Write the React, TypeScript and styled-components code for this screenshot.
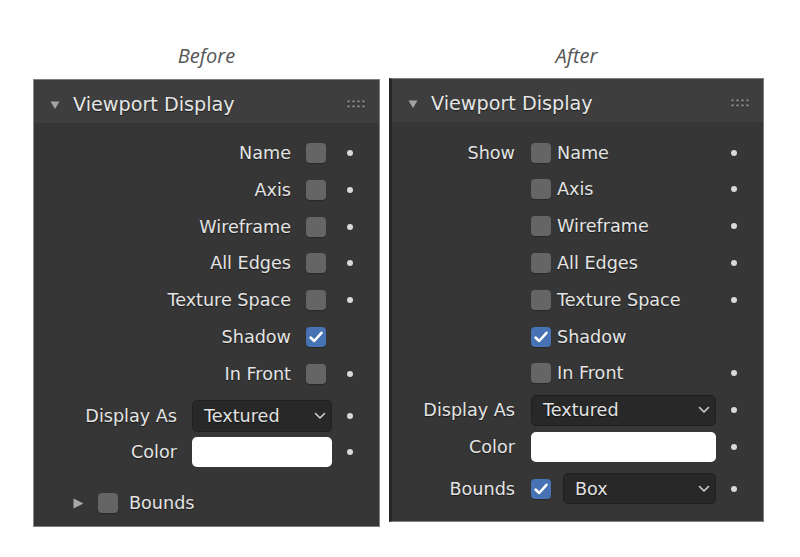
import React from 'react';
import styled, { createGlobalStyle } from 'styled-components';

const Global = createGlobalStyle`
  html, body { margin: 0; padding: 0; background: #ffffff; }
  body { font-family: "DejaVu Sans", "Noto Sans", "Liberation Sans", sans-serif; }
  * { box-sizing: border-box; }
`;

const Page = styled.div`
  width: 800px;
  height: 557px;
  display: flex;
  align-items: flex-start;
  gap: 9px;
  padding: 45px 0 0 33px;
`;

const Column = styled.div<{ $width: number }>`
  width: ${p => p.$width}px;
  display: flex;
  flex-direction: column;
`;

const Caption = styled.div<{ $mb: number }>`
  font-family: "Open Sans", "Noto Sans", sans-serif;
  font-style: italic;
  font-size: 20px;
  line-height: 22px;
  color: #555555;
  text-align: center;
  margin-bottom: ${p => p.$mb}px;
`;

const Panel = styled.div<{ $after?: boolean }>`
  background: #363636;
  border: 1px solid #7e7e7e;
  border-left: ${p => (p.$after ? '3px solid #262626' : '1px solid #8a8a8a')};
  color: #e4e4e4;
  font-size: 17.6px;
  text-shadow: 0 1px 1px rgba(0, 0, 0, 0.55);
`;

const Header = styled.div`
  height: 43px;
  background: #3e3e3e;
  display: flex;
  align-items: center;
  padding: 6px 14px 0 16px;
  color: #e6e6e6;
`;

const HeaderTitle = styled.span`
  flex: 1;
  margin-left: 13px;
  font-size: 19.2px;
  white-space: nowrap;
`;

const Body = styled.div<{ $pt: number; $pb: number }>`
  padding: ${p => p.$pt}px 0 ${p => p.$pb}px 0;
  display: flex;
  flex-direction: column;
`;

const SplitRow = styled.div<{ $mt?: number }>`
  height: 36.8px;
  margin-top: ${p => p.$mt ?? 0}px;
  display: grid;
  grid-template-columns: 1fr auto 36px;
  align-items: center;
  padding-right: 11px;
`;

const AfterRow = styled.div<{ $mt?: number }>`
  height: 36.8px;
  margin-top: ${p => p.$mt ?? 0}px;
  display: grid;
  grid-template-columns: 139px 1fr 36px;
  align-items: center;
  padding-right: 11px;
`;

const Label = styled.span<{ $mr: number }>`
  text-align: right;
  white-space: nowrap;
  margin-right: ${p => p.$mr}px;
`;

const Box = styled.span<{ $checked?: boolean; $mr?: number }>`
  width: 20px;
  height: 20px;
  border-radius: 4px;
  background: ${p => (p.$checked ? '#4772b3' : '#656565')};
  display: inline-flex;
  align-items: center;
  justify-content: center;
  margin-right: ${p => p.$mr ?? 0}px;
  flex: none;
  box-shadow: 0 1px 1px rgba(0, 0, 0, 0.25);
`;

const CheckCell = styled.div<{ $gap: number }>`
  display: flex;
  align-items: center;
  gap: ${p => p.$gap}px;
  min-width: 0;
`;

const Dot = styled.span<{ $hidden?: boolean }>`
  justify-self: center;
  width: 6px;
  height: 6px;
  border-radius: 50%;
  background: #d9d9d9;
  visibility: ${p => (p.$hidden ? 'hidden' : 'visible')};
`;

const Dropdown = styled.div<{ $w?: number; $h: number }>`
  ${p => (p.$w ? `width: ${p.$w}px;` : 'flex: 1;')}
  height: ${p => p.$h}px;
  background: #282828;
  border: 1px solid #1f1f1f;
  border-radius: 5px;
  display: flex;
  align-items: center;
  padding: 0 5px 0 11px;
  color: #e2e2e2;
`;

const DropText = styled.span`
  flex: 1;
`;

const Swatch = styled.div<{ $w?: number; $h: number }>`
  ${p => (p.$w ? `width: ${p.$w}px;` : '')}
  height: ${p => p.$h}px;
  background: #ffffff;
  border-radius: 5px;
`;

const SubHeader = styled.div<{ $mt: number }>`
  height: 36.8px;
  margin-top: ${p => p.$mt}px;
  display: flex;
  align-items: center;
  padding-left: 39px;
`;

const SubBox = styled(Box)`
  margin-left: 14px;
  margin-right: 11px;
`;

const Check = () => (
  <svg width="16" height="14" viewBox="0 0 16 14">
    <path d="M2.5 7.5 L6.2 11 L13.5 2.8" fill="none" stroke="#ffffff" strokeWidth="2.5" strokeLinecap="round" strokeLinejoin="round" />
  </svg>
);

const Chevron = () => (
  <svg width="12" height="8" viewBox="0 0 12 8">
    <path d="M1.5 1.5 L6 6 L10.5 1.5" fill="none" stroke="#cfcfcf" strokeWidth="1.6" strokeLinecap="round" strokeLinejoin="round" />
  </svg>
);

const DownTri = () => (
  <svg width="10" height="8" viewBox="0 0 10 8">
    <polygon points="0.5,0.5 9.5,0.5 5,8" fill="#a3a3a3" />
  </svg>
);

const RightTri = () => (
  <svg width="11" height="11" viewBox="0 0 11 11">
    <polygon points="0.5,0.5 10.5,5.5 0.5,10.5" fill="#a8a8a8" />
  </svg>
);

const Grip = () => (
  <svg width="18" height="10" viewBox="0 0 18 10">
    {[0, 1, 2, 3].map(c =>
      [0, 1].map(r => (
        <g key={`${c}-${r}`}>
          <rect x={c * 5 + 0.5} y={r * 5 + 1.5} width="2" height="2" fill="#1e1e1e" />
          <rect x={c * 5 + 0.5} y={r * 5 + 0.5} width="2" height="2" fill="#9a9a9a" />
        </g>
      ))
    )}
  </svg>
);

const PanelHeader = () => (
  <Header>
    <DownTri />
    <HeaderTitle>Viewport Display</HeaderTitle>
    <Grip />
  </Header>
);

const checks: { label: string; checked?: boolean; dot: boolean }[] = [
  { label: 'Name', dot: true },
  { label: 'Axis', dot: true },
  { label: 'Wireframe', dot: true },
  { label: 'All Edges', dot: true },
  { label: 'Texture Space', dot: true },
  { label: 'Shadow', checked: true, dot: false },
  { label: 'In Front', dot: true },
];

export default function App() {
  return (
    <>
      <Global />
      <Page>
        <Column $width={347}>
          <Caption $mb={12}>Before</Caption>
          <Panel>
            <PanelHeader />
            <Body $pt={11.6} $pb={4}>
              {checks.map(r => (
                <SplitRow key={r.label}>
                  <Label $mr={15}>{r.label}</Label>
                  <Box $checked={r.checked} $mr={6}>{r.checked && <Check />}</Box>
                  <Dot $hidden={!r.dot} />
                </SplitRow>
              ))}
              <SplitRow $mt={5}>
                <Label $mr={15}>Display As</Label>
                <Dropdown $w={140} $h={32}>
                  <DropText>Textured</DropText>
                  <Chevron />
                </Dropdown>
                <Dot />
              </SplitRow>
              <SplitRow>
                <Label $mr={15}>Color</Label>
                <Swatch $w={140} $h={30} />
                <Dot />
              </SplitRow>
              <SubHeader $mt={14}>
                <RightTri />
                <SubBox />
                <span>Bounds</span>
              </SubHeader>
            </Body>
          </Panel>
        </Column>
        <Column $width={375}>
          <Caption $mb={11}>After</Caption>
          <Panel $after>
            <PanelHeader />
            <Body $pt={12.2} $pb={14}>
              {checks.map((r, i) => (
                <AfterRow key={r.label}>
                  <Label $mr={16}>{i === 0 ? 'Show' : ''}</Label>
                  <CheckCell $gap={6}>
                    <Box $checked={r.checked}>{r.checked && <Check />}</Box>
                    <span>{r.label}</span>
                  </CheckCell>
                  <Dot $hidden={!r.dot} />
                </AfterRow>
              ))}
              <AfterRow>
                <Label $mr={16}>Display As</Label>
                <Dropdown $h={31}>
                  <DropText>Textured</DropText>
                  <Chevron />
                </Dropdown>
                <Dot />
              </AfterRow>
              <AfterRow>
                <Label $mr={16}>Color</Label>
                <Swatch $h={30} />
                <Dot />
              </AfterRow>
              <AfterRow $mt={5}>
                <Label $mr={16}>Bounds</Label>
                <CheckCell $gap={12}>
                  <Box $checked><Check /></Box>
                  <Dropdown $h={31}>
                    <DropText>Box</DropText>
                    <Chevron />
                  </Dropdown>
                </CheckCell>
                <Dot />
              </AfterRow>
            </Body>
          </Panel>
        </Column>
      </Page>
    </>
  );
}
